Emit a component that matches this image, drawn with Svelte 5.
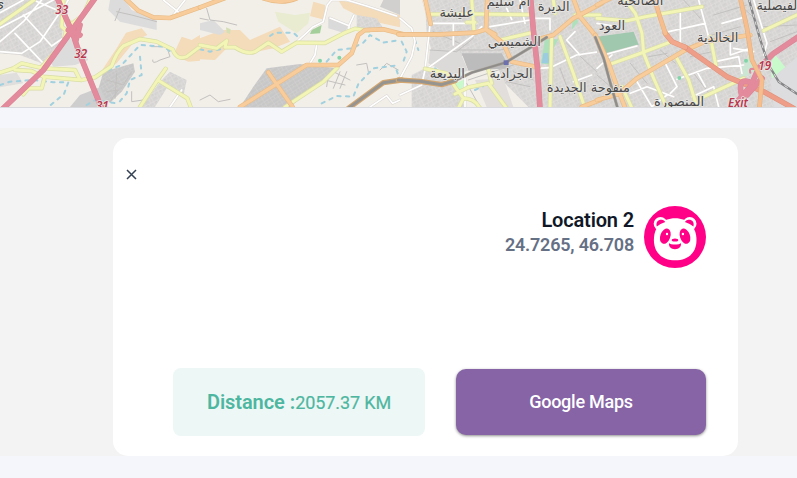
<script>
  // Map geometry is stored in four tiles, at three units per pixel.
  const tiles = [
    {
      x: 0,
      areas: [
        ['M0 0H165L190 65L185 125L125 190L60 165L0 160Z', 'url(#blocksA)'],
        ['M205 110L245 145L265 180L225 195L160 200L150 185Z', '#dddcdc'],
        ['M330 0H375L395 30L470 60V90L360 65L325 30Z', '#dddcdc'],
        ['M378 98L425 85L442 105L405 122L350 190L300 220L350 145Z', '#f4dbb9'],
        ['M545 110L575 120L600 105V182L565 185L520 165Z', '#f4dbb9'],
        ['M310 215L400 190L405 215L365 275L330 308L290 285Z', 'url(#blocksB)'],
        ['M210 321L240 285L300 262L325 321Z', '#cecece'],
        ['M510 215L560 240L550 290L500 265L465 321H425L480 245Z', 'url(#blocksA)'],
        ['M0 225L50 218L70 250L0 262Z', '#e0dfdd']
      ],
      streets: [
        'M0 155L65 160L120 125L205 0M70 45L155 138M45 100L128 188M0 125L70 65L125 0M0 38L70 0M0 84L160 0M155 138L188 115M100 0L190 38M490 0L540 40L600 20M555 0L520 45M545 270L510 321'
      ],
      yellow: [
        'M0 72L102 0', 'M190 0L185 80L198 92L190 130L125 200', 'M270 0L250 45L215 72L208 65',
        'M0 218L40 205L65 190L130 205L225 210L238 236', 'M45 210L95 213L130 230L245 240L285 232L335 198Q350 155 370 138L420 117L470 125L518 148Q530 182 560 170L600 140',
        'M70 283L85 265L125 265L133 235', 'M497 206L473 240L420 321M473 240L562 295L572 321'
      ],
      orange: ['M375 -5L415 32L460 52L510 54L600 22'],
      motorway: ['M285 -5L130 210L10 325', 'M172 -5L220 105L238 160L305 325', 'M205 90L240 105', 'M240 75L228 120'],
      water: ['M0 255L30 245L100 240L160 247H205L192 282L145 321', 'M300 220L365 195L420 135L490 140L520 160', 'M420 170L425 225L390 240L380 280L350 315', 'M260 315L285 300L350 310'],
      paths: 'M350 35L395 45L470 65M360 25L345 62M455 140L500 140L510 170L480 180Q455 195 458 180M395 275V305L430 300M320 240L370 255L395 215M320 275L355 270L330 305M350 220L345 295',
      labels: [[185, 42, '33', 'red'], [242, 175, '32', 'red'], [307, 331, '31', 'red'], [-3, 25, 'ي', 'town']]
    },
    {
      x: 600,
      areas: [
        ['M0 115L65 90L120 90L150 120L240 80L270 125L220 145L170 155L80 145L45 180L0 178Z', '#f4dbb9'],
        ['M225 35L285 45L330 38L325 70L290 100L235 65Z', '#e9ecd0'],
        ['M340 5L375 15L375 60L330 48Z', '#f4dbb9'],
        ['M415 0L490 15L600 45V82L500 60L430 25Z', '#f4dbb9'],
        ['M335 90L365 75L360 100L330 102Z', '#a5cf9a'],
        ['M385 50L445 75L435 100L385 85Z', '#dadada'],
        ['M78 82L92 88L90 102L80 98Z', '#d5dfb4'],
        ['M0 70L40 60L75 95L60 105L0 90Z', '#dddcdc'],
        ['M200 205L300 192L410 205L345 260L270 321H120L160 260Z', 'url(#blocksB)'],
        ['M550 0H600V45L540 20Z', '#d1d0cf'],
        ['M470 45L530 55L550 85L470 85Z', 'url(#blocksA)']
      ],
      streets: ['M288 128L340 80L370 65L382 15L395 0H440L500 18L590 48', 'M390 54L447 77L462 45M447 77V92', 'M350 135L345 165L330 190', 'M510 321L560 287L578 310L600 300'],
      yellow: ['M0 135L50 145L80 122L75 142L105 142Q140 165 165 155L205 128L245 155L290 128L375 129L435 98L465 86L505 92', 'M255 321L370 245L412 203'],
      orange: ['M0 22L75 -6', 'M190 -5Q245 14 290 -5', 'M120 321L320 195H415L455 160L475 105L495 90L550 88L610 103', 'M205 217L278 321'],
      rail: ['M445 325L550 248L605 240'],
      water: ['M0 148L30 155L60 148L80 130', 'M210 108L225 98L280 98L295 112', 'M365 310L410 288L460 290L475 252L520 205L585 197L600 240', 'M380 185L410 150L455 145L490 128L510 105L550 128L600 120'],
      paths: 'M20 25L30 60L70 65L110 75M0 55L25 60M400 215L450 240M375 240L435 255M420 215L400 265M440 215L420 265M385 225L380 260M0 300L30 285L55 305L90 298M470 195L500 190L505 215M540 210L560 190L595 210',
      labels: []
    },
    {
      x: 1200,
      areas: [
        ['M75 0H600V321H385L310 245L280 165L100 170L80 100Z', 'url(#blocksA)'],
        ['M185 160H305L330 205L205 212Z', '#bdbcbc'],
        ['M35 225L75 205L165 250L195 321H35Z', 'url(#blocksA)'],
        ['M90 150L175 145L205 212L150 225L85 190Z', '#dcdad8'],
        ['M435 118H475L455 155V195L422 190Z', '#aee1bb'], ['M430 160L445 158L448 190L425 190Z', '#9ccce0'],
        ['M165 250L195 238L190 260L175 275Z', '#c8facc'], ['M225 240L310 235L340 321H260Z', '#e1dedb'],
        ['M520 40L535 65L515 90Z', '#aee1bb']
      ],
      streets: ['M0 55L35 85L45 125L35 170L0 235', 'M70 0L90 75L75 210M75 210L215 110L245 80M0 285L65 255L75 210M90 70H230M160 70V135M270 80L390 60M360 0L375 70M415 205L450 203L530 165L600 155M525 95L500 120L540 165M575 225L520 245M195 235V321M320 25L335 58M400 55H450V90'],
      yellow: ['M85 43L225 42L395 44', 'M215 -5L222 95M200 67H225', 'M300 120L395 98', 'M75 206L140 220L165 260L190 295L175 325M165 282L205 262L265 250L320 325M190 295Q225 295 240 325', 'M265 208L275 250', 'M455 110L450 325', 'M480 110L520 220L555 325', 'M525 45H600', 'M460 0L465 40'],
      orange: ['M-5 103H120L225 98L258 88L310 130L335 185L415 202M75 -5L92 72M262 -5L258 88M258 88L285 103', 'M425 115L460 105L520 55L605 10M520 -5L540 50L585 105L605 155', 'M545 321L600 300'],
      rail: ['M-5 240L60 244L125 254L165 242'],
      train: ['M165 242L215 218L318 187L415 128L440 112'],
      motorway: ['M392 -5L400 90L412 200L420 325'],
      water: ['M5 125L20 155L10 185', 'M45 120L55 150', 'M105 205L140 235', 'M225 270L250 258'],
      paths: 'M100 95L190 135M90 150L170 155L220 115M170 150L300 150L380 135M205 240L340 195M200 250L240 321M480 205L510 285M500 130L600 225M340 215L400 240M320 245L390 260',
      labels: [[170, 51, 'عليشة', 'town'], [325, 19, 'أم سليم', 'town'], [461, 33, 'الديرة', 'town'], [343, 137, 'الشميسي', 'town'], [142, 234, 'البديعة', 'town'], [333, 234, 'الجرادية', 'town'], [565, 277, 'منفوحة الجديدة', 'town']]
    },
    {
      x: 1791,
      areas: [
        ['M0 0H600V321H0Z', 'url(#blocksA)'], ['M0 110L110 95L125 135L20 165Z', '#a0c8ae'],
        ['M535 165L572 210L525 240L520 190Z', '#c8facc'], ['M520 240L600 170V321H530Z', '#dddcdf'],
        ['M185 0L215 50L210 80L180 70Z', '#dfdbd8'], ['M430 205L460 155L485 205L430 240Z', '#cce6d4']
      ],
      streets: ['M20 165L120 138M250 40V130M305 0L340 130L355 190M215 95L325 70M375 70L440 52M400 130V165L460 145M355 185L425 170L435 220M205 190L240 260L220 280M240 238L330 205L440 195M300 215L325 260M120 245L165 321M100 280L150 260L230 290M285 290L350 260L365 321M0 205L45 165M165 320L210 285M470 0L510 130L500 165M410 145L470 155M0 70L60 80'],
      yellow: ['M0 55L90 62L145 50L315 20', 'M85 0L115 40L135 100L140 160L170 235L210 325', 'M38 193L125 162L215 128', 'M237 170L275 240L300 321', 'M340 110L357 198', 'M285 321L320 290L440 235', 'M500 92L605 42', 'M75 260L105 325'],
      orange: ['M0 300L65 282L120 235L265 150L325 125L460 105', 'M0 15L40 -5', 'M-5 105L15 145L35 190L60 260L85 325'],
      red: ['M265 142L390 230L500 275L590 325'],
      redNorth: ['M205 100L225 125L265 142'],
      train: ['M-5 112L20 175L36 235L62 325'],
      black: ['M455 -5L490 120L515 195L545 245L605 285'],
      motorway: ['M605 110L530 160L485 205L460 260L425 300', 'M455 245Q420 235 435 290', 'M495 235L450 285'],
      ramp: ['M460 218Q455 203 472 207'],
      orangeTop: ['M172 -5L190 55L205 100', 'M430 -5L450 85L465 180L495 240L487 325'],
      paths: 'M0 225L75 290M100 190L150 250M260 0L310 55M350 45L450 15M345 105L430 80M280 170L345 155M190 150L235 190M155 170L210 160M290 220L340 285M410 160H430M440 25L500 80L600 75M520 125L600 95',
      labels: [[130, 14, 'الصالحية', 'town'], [45, 90, 'العود', 'town'], [362, 126, 'الخالدية', 'town'], [545, 30, 'الفيصلية', 'town'], [246, 317, 'المنصورة', 'town'], [503, 211, '19', 'red'], [423, 321, 'Exit', 'red']]
    }
  ];

  const layers = [
    ['yellow', '#d9dda5', '#f2f5b5', 13, 9],
    ['orange', '#e9ba84', '#f8cd9b', 14, 10],
    ['red', '#df9078', '#ed9d88', 16, 13],
    ['redNorth', '#df9078', '#f2a88c', 16, 13],
    ['rail', '#d3a670', '#969490', 16, 9],
    ['train', '#aaa59f', '#8f8d8a', 9, 6],
    ['motorway', '#dc8495', '#e38b9c', 17, 14],
    ['ramp', '#dc8495', '#e38b9c', 6, 4],
    ['orangeTop', '#e5af72', '#f6bd8f', 14, 11]
  ];
</script>

<div class="page">
  <svg class="map" viewBox="0 0 2391 321" preserveAspectRatio="none" aria-label="Map">
    <defs>
      <pattern id="blocksA" width="27" height="24" patternUnits="userSpaceOnUse" patternTransform="rotate(-27)">
        <rect width="27" height="24" fill="#d6d5d4" />
        <path d="M0 1H27M1 0V24M14 0V12M1 12H27M20 12V24" stroke="#e2e0de" stroke-width="2" />
        <path d="M6 5H11M17 7V11M8 17H14" stroke="#cccbca" stroke-width="2" />
      </pattern>
      <pattern id="blocksB" width="22" height="20" patternUnits="userSpaceOnUse" patternTransform="rotate(-32)">
        <rect width="22" height="20" fill="#c8c7c7" />
        <path d="M0 1H22M1 0V20M12 1V11M1 11H22" stroke="#d1d0cf" stroke-width="2" />
      </pattern>
    </defs>
    <rect width="2391" height="321" fill="#f2efe9" />
    {#each tiles as tile}
      <g transform="translate({tile.x} 0)">
        {#each tile.areas as [d, fill]}<path {d} {fill} />{/each}
        <path class="line" d={tile.paths} stroke="#c3c1bf" stroke-width="3" />
        {#each tile.water ?? [] as d}<path class="line water" {d} />{/each}
        {#each tile.streets as d}
          <path class="line" {d} stroke="#dad7d3" stroke-width="8" />
          <path class="line" {d} stroke="#fff" stroke-width="5" />
        {/each}
      </g>
    {/each}
    {#each layers as [key, edge, fill, outer, inner]}
      {#each tiles as tile}
        <g transform="translate({tile.x} 0)">
          {#each tile[key] ?? [] as d}<path class="line" {d} stroke={edge} stroke-width={outer} />{/each}
          {#each tile[key] ?? [] as d}<path class="line" {d} stroke={fill} stroke-width={inner} />{/each}
        </g>
      {/each}
    {/each}
    {#each tiles as tile}
      <g transform="translate({tile.x} 0)">
        {#each tile.black ?? [] as d}
          <path class="line" {d} stroke="#858587" stroke-width="7" />
          <path {d} fill="none" stroke="#ddd" stroke-width="3" stroke-dasharray="12 12" />
        {/each}
      </g>
    {/each}
    <g fill="#82d4a9">
      <circle cx="960" cy="182" r="6" /><circle cx="1018" cy="173" r="6" />
      <circle cx="2038" cy="234" r="6" /><circle cx="2238" cy="182" r="6" />
    </g>
    <rect x="1511" y="181" width="15" height="14" fill="#6c70ad" />
    {#each tiles as tile}
      <g transform="translate({tile.x} 0)">
        {#each tile.labels as [x, y, text, kind]}<text {x} {y} class={kind}>{text}</text>{/each}
      </g>
    {/each}
  </svg>

  <section class="panel">
    <article class="card">
      <button class="close" aria-label="Close">
        <svg width="11" height="11" viewBox="0 0 11 11"><path d="M1 1L10 10M10 1L1 10" /></svg>
      </button>
      <div class="place">
        <div class="details">
          <div class="name">Location 2</div>
          <div class="coords">24.7265, 46.708</div>
        </div>
        <svg class="avatar" viewBox="0 0 62 62" aria-hidden="true">
          <circle cx="31" cy="31" r="31" fill="#ff0087" />
          <g fill="#fff">
            <circle cx="16.5" cy="17.8" r="6.8" /><circle cx="45.700" cy="17.8" r="6.8" />
            <path d="M31.200 12.300C44 12.300 52.500 21 52.500 34C52.500 47 44 54.300 31.200 54.300S9.900 47 9.900 34C9.900 21 18 12.300 31.200 12.300Z" />
          </g>
          <g fill="#ff0087">
            <path d="M12.800 20.500C11.500 16 14.500 13.300 18 13.800Q20.300 14.300 21.300 16Q16 17.500 12.800 20.500ZM49.400 20.500C50.700 16 47.700 13.300 44.200 13.800Q41.900 14.300 40.900 16Q46.200 17.500 49.400 20.500Z" />
            <ellipse cx="21.300" cy="30.200" rx="5" ry="7.900" transform="rotate(20 21.300 30.200)" />
            <ellipse cx="41" cy="30.200" rx="5" ry="7.900" transform="rotate(-20 41 30.200)" />
            <ellipse cx="31" cy="34" rx="3.300" ry="1.600" />
            <path d="M25 37.300Q28 39 31 38.400Q34 39 37 37.300C37.300 41 35 43.200 31 43.200S24.700 41 25 37.300Z" />
          </g>
          <circle cx="23" cy="28" r="1.200" fill="#fff" /><circle cx="38.900" cy="28" r="1.200" fill="#fff" />
        </svg>
      </div>
      <div class="actions">
        <div class="distance"><b>Distance :</b><span>2057.37 KM</span></div>
        <button class="maps">Google Maps</button>
      </div>
    </article>
  </section>
</div>

<style>
  .page {
    width: 797px;
    height: 478px;
    overflow: hidden;
    background: #f5f6fb;
    font-family: Roboto, 'Liberation Sans', sans-serif;
  }
  .map {
    display: block;
    width: 797px;
    height: 108px;
    box-sizing: border-box;
    border-bottom: 1px solid #d9dadd;
  }
  .line { fill: none; stroke-linecap: round; stroke-linejoin: round; }
  .water { stroke: #a1d0df; stroke-width: 6; stroke-dasharray: 10 16; }
  .town, .red {
    text-anchor: middle;
    font-family: 'Noto Sans', 'DejaVu Sans', sans-serif;
    paint-order: stroke;
    stroke: #e9e7e4;
    stroke-width: 5px;
    stroke-linejoin: round;
  }
  .town { font-family: 'DejaVu Sans', sans-serif; font-size: 39px; fill: #484848; direction: rtl; }
  .red { font-size: 35px; font-style: italic; font-weight: 600; fill: #b9384f; }
  .panel {
    display: flex;
    height: 328px;
    margin-top: 20px;
    padding: 10px 59px 0 113px;
    box-sizing: border-box;
    background: #f3f3f3;
  }
  .card {
    display: flex;
    flex-direction: column;
    width: 625px;
    height: 318px;
    box-sizing: border-box;
    padding: 31px 32px 20px 13px;
    border-radius: 15px;
    background: #fff;
  }
  button { border: 0; font: inherit; }
  .close { display: flex; width: 11px; height: 11px; padding: 0; background: none; }
  .close path { stroke: #344054; stroke-width: 1.5; fill: none; }
  .place { display: flex; justify-content: flex-end; gap: 10px; margin-top: 26px; }
  .avatar { width: 62px; height: 62px; }
  .details { padding-top: 2px; text-align: right; }
  .name { font-size: 20px; font-weight: 600; line-height: 25px; letter-spacing: -0.15px; color: #101828; }
  .coords { font-size: 18px; font-weight: 600; line-height: 24px; letter-spacing: -0.2px; color: #667085; }
  .actions { display: flex; justify-content: flex-end; gap: 31px; margin-top: auto; }
  .distance {
    display: flex;
    align-items: baseline;
    justify-content: center;
    width: 252px;
    height: 68px;
    line-height: 68px;
    border-radius: 8px;
    background: #edf7f5;
    color: #4db6a0;
    font-size: 18px;
  }
  .distance b { font-size: 20px; font-weight: 600; letter-spacing: -0.05px; }
  .distance span { letter-spacing: -0.1px; -webkit-text-stroke: 0.2px currentColor; }
  .maps {
    width: 250px;
    height: 66px;
    margin-top: 1px;
    padding: 0 0 2px;
    border-radius: 10px;
    background: #8664a6;
    box-shadow: 0 1px 3px rgba(0, 0, 0, 0.45);
    color: #fff;
    font-size: 18px;
    font-weight: 500;
    letter-spacing: -0.25px;
  }
</style>
